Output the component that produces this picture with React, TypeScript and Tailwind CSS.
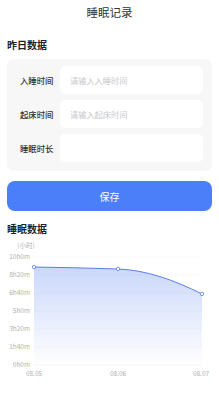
const font = { fontFamily: '"Noto Sans CJK SC", "Noto Sans", sans-serif' };

const fields = [
  { label: '入睡时间', placeholder: '请输入入睡时间' },
  { label: '起床时间', placeholder: '请输入起床时间' },
  { label: '睡眠时长', placeholder: '' },
];

const yTicks = ['10h0m', '8h20m', '6h40m', '5h0m', '3h20m', '1h40m', '0h0m'];
const xTicks = [
  { x: 34, label: '08.05' },
  { x: 118, label: '08.06' },
  { x: 201, label: '08.07' },
];

function SleepChart() {
  // page y minus 237 = svg y
  const top = 22;
  const step = 18;
  const line = 'M34 32 C62 32.5 90 33 118 34 C146 35 174 45 202 59';
  return (
    <svg width="219" height="157" viewBox="0 0 219 157" className="block">
      <defs>
        <linearGradient id="area" x1="0" y1="0" x2="0" y2="1">
          <stop offset="0%" stopColor="#4f7cf0" stopOpacity="0.3" />
          <stop offset="100%" stopColor="#4f7cf0" stopOpacity="0" />
        </linearGradient>
      </defs>
      <text x="26" y="12.5" fontSize="6.5" fill="#b0b0b0" textAnchor="middle" style={font}>
        (小时)
      </text>
      {yTicks.map((t, i) => (
        <g key={t}>
          <line
            x1="34"
            x2="202"
            y1={top + i * step}
            y2={top + i * step}
            stroke={i === yTicks.length - 1 ? '#ebebeb' : '#f5f5f5'}
            strokeWidth="0.6"
          />
          <text x="30" y={top + i * step + 2.3} fontSize="6.5" fill="#b0b0b0" textAnchor="end" style={font}>
            {t}
          </text>
        </g>
      ))}
      <path d={`${line} L202 130 L34 130 Z`} fill="url(#area)" />
      <path d={line} fill="none" stroke="#5a7fe6" strokeWidth="1" />
      {[
        [34, 32],
        [118, 34],
        [202, 59],
      ].map(([cx, cy]) => (
        <circle key={cx} cx={cx} cy={cy} r="1.7" fill="#fff" stroke="#5a7fe6" strokeWidth="0.8" />
      ))}
      {xTicks.map((t) => (
        <text key={t.label} x={t.x} y="141" fontSize="6.5" fill="#b0b0b0" textAnchor="middle" style={font}>
          {t.label}
        </text>
      ))}
    </svg>
  );
}

export default function App() {
  return (
    <div className="w-[219px] h-[394px] bg-white overflow-hidden" style={font}>
      {/* Title */}
      <div className="h-[26px] flex items-center justify-center text-[11.5px] text-[#333]">睡眠记录</div>

      {/* 昨日数据 */}
      <div className="px-[7px]">
        <div className="h-[33px] pt-[4px] flex items-center text-[10px] font-bold text-[#222]">昨日数据</div>
        <div className="bg-[#f7f7f7] rounded-[7px] pl-[13px] pr-[9px] pt-[7px] pb-[9px] flex flex-col gap-[6px]">
          {fields.map((f) => (
            <div key={f.label} className="flex items-center">
              <span className="w-[40px] shrink-0 text-[8.4px] font-medium text-[#333]">{f.label}</span>
              <div className="flex-1 h-[28px] bg-white rounded-[5px] flex items-center pl-[10px] text-[8.2px] text-[#c9c9c9]">
                {f.placeholder}
              </div>
            </div>
          ))}
        </div>
        <button className="mt-[10px] w-full h-[30px] rounded-[8px] bg-[#4a7ff9] text-white text-[10px] flex items-center justify-center">
          保存
        </button>
        <div className="mt-[12px] leading-[12px] text-[10px] font-bold text-[#222]">睡眠数据</div>
      </div>

      <SleepChart />
    </div>
  );
}
